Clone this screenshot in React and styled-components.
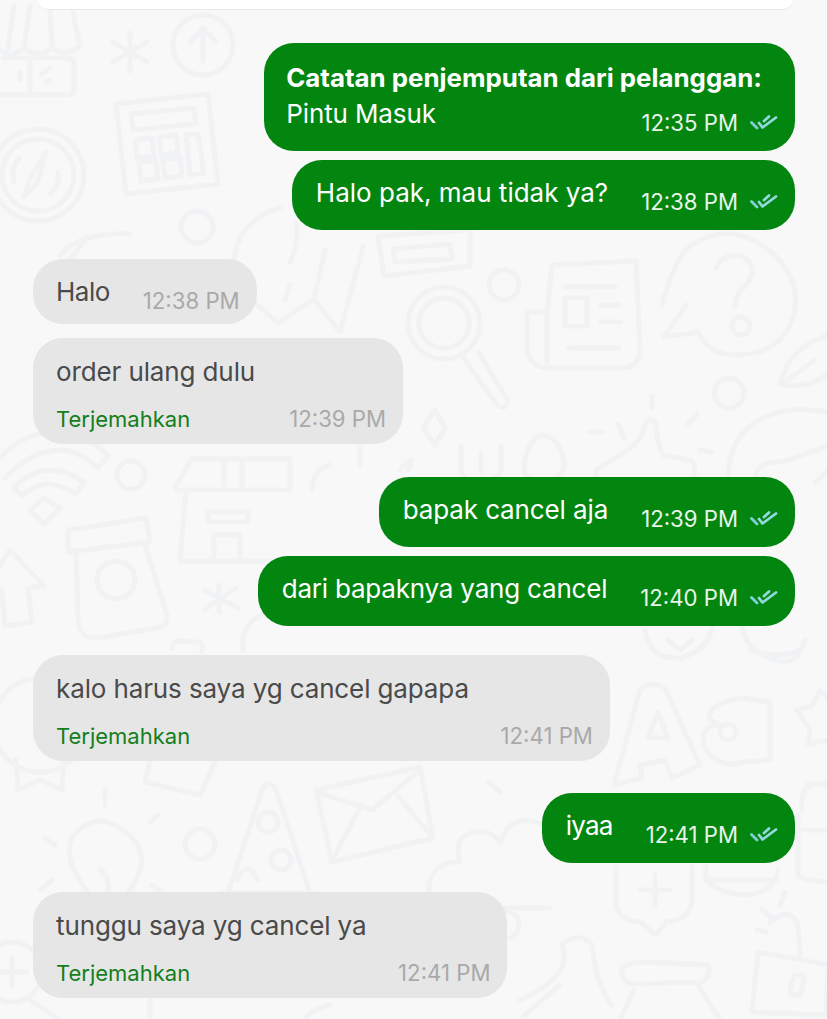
import React from 'react';
import styled, { createGlobalStyle } from 'styled-components';

const Global = createGlobalStyle`
  html, body {
    margin: 0;
    padding: 0;
    background: #f8f8f9;
  }
  body {
    font-family: Inter, "Liberation Sans", sans-serif;
  }
`;

const s = {
  Page: styled.div`
    position: relative;
    width: 827px;
    height: 1019px;
    overflow: hidden;
    background: #f8f8f9;
  `,
  Wallpaper: styled.svg`
    position: absolute;
    inset: 0;
    fill: none;
    stroke: #f1f2f4;
    stroke-width: 5;
    stroke-linecap: round;
    stroke-linejoin: round;
  `,
  TopCard: styled.div`
    position: relative;
    height: 9px;
    margin: 0 34px 0 38px;
    background: #fff;
    border-bottom: 1px solid #e9e9ea;
    border-radius: 0 0 18px 18px;
  `,
  Thread: styled.div`
    position: relative;
    display: flex;
    flex-direction: column;
    padding: 33px 32px 0 33px;
  `,
  Bubble: styled.div`
    align-self: ${(p) => (p.$mine ? 'flex-end' : 'flex-start')};
    margin-top: ${(p) => p.$gap || 0}px;
    box-sizing: border-box;
    height: ${(p) => p.$h}px;
    padding: ${(p) => p.$pt}px 17px 0 ${(p) => p.$pl ?? 24}px;
    border-radius: 30px;
    background: ${(p) => (p.$mine ? '#03860f' : '#e6e6e6')};
    color: ${(p) => (p.$mine ? '#fff' : '#4a4a4a')};
  `,
  Row: styled.div`
    display: flex;
    align-items: flex-start;
    justify-content: space-between;
    gap: 33px;
  `,
  Text: styled.div`
    font-size: 26px;
    line-height: 32px;
    letter-spacing: ${(p) => p.$ls ?? -0.12}px;
    white-space: nowrap;
    padding-right: ${(p) => p.$pr || 0}px;
  `,
  Title: styled.div`
    font-size: 25.85px;
    line-height: 30px;
    font-weight: 700;
    white-space: nowrap;
    padding-right: 16px;
    margin-bottom: 5px;
  `,
  Meta: styled.div`
    display: flex;
    align-items: center;
    gap: 12px;
    margin-top: ${(p) => p.$mt || 0}px;
    font-size: 22.2px;
    line-height: 28px;
    white-space: nowrap;
    color: ${(p) => (p.$mine ? '#e9f5ea' : '#a9a9a9')};
  `,
  Translate: styled.div`
    font-size: 22px;
    line-height: 28px;
    color: #137f1c;
    white-space: nowrap;
  `,
  FooterRow: styled.div`
    display: flex;
    justify-content: space-between;
    margin-top: 17px;
  `,
};

const Ticks = () => (
  <svg width="28" height="18" viewBox="0 0 28 18" fill="none" stroke="#93d8de" strokeWidth="2.8" strokeLinecap="round" strokeLinejoin="round">
    <path d="M1.5 8.5 L7 14" stroke="#83cedb" />
    <path d="M9 9 L12.5 13.5 L26 3.5" />
    <path d="M14 7 L19 2.5" />
  </svg>
);

const Mine = ({ text, time, gap, ls }) => (
  <s.Bubble $mine $gap={gap} $h={70} $pt={17}>
    <s.Row>
      <s.Text $ls={ls}>{text}</s.Text>
      <s.Meta $mine $mt={11}>
        {time}
        <Ticks />
      </s.Meta>
    </s.Row>
  </s.Bubble>
);

const Theirs = ({ text, time, gap, pr = 124 }) => (
  <s.Bubble $gap={gap} $h={106} $pt={18} $pl={23}>
    <s.Text $pr={pr}>{text}</s.Text>
    <s.FooterRow>
      <s.Translate>Terjemahkan</s.Translate>
      <s.Meta>{time}</s.Meta>
    </s.FooterRow>
  </s.Bubble>
);

const Doodles = () => (
  <s.Wallpaper width="827" height="1019" viewBox="0 0 827 1019">
    {/* store */}
    <path d="M-2 48 Q10 60 24 48 Q38 60 52 48 Q66 58 80 46 L72 8 M24 48 L30 6 M52 48 L50 6 M8 48 L14 6" />
    <path d="M3 58 H68 Q74 58 74 64 V88 Q74 95 66 95 H0 M30 60 V90 M20 72 V80 M42 74 L50 68 M46 82 L50 80" />
    {/* asterisk + arrow circle */}
    <path d="M130 33 V71 M113 42 L147 62 M147 42 L113 62" />
    <circle cx="203" cy="45" r="30" />
    <path d="M203 61 V28 M190 42 L203 28 L216 42" />
    {/* calculator */}
    <path d="M116 104 L208 94 L218 184 L126 194 Z" />
    <path d="M131 114 L194 108 L196 124 L133 130 Z" />
    <path d="M135 140 L152 138 L154 156 L137 158 Z M159 137 L176 135 L178 153 L161 155 Z M139 163 L156 161 L158 179 L141 181 Z M163 160 L180 158 L182 176 L165 178 Z M186 135 L198 134 L204 173 L190 175 Z" />
    {/* compass */}
    <circle cx="38" cy="175" r="46" />
    <circle cx="38" cy="175" r="36" />
    <path d="M46 152 L30 178 L24 196 L38 182 Z M14 182 Q10 168 20 158 M50 194 Q60 186 58 172" />
    <circle cx="197" cy="227" r="16" />
    {/* map pin + card */}
    <path d="M60 255 Q80 232 130 234 M68 262 L85 240" />
    <path d="M240 290 L278 323 L314 299 L340 332 L363 247 M314 299 L325 250 M285 300 L290 285 M240 290 Q225 250 250 225 Q262 212 280 208 M290 262 Q300 240 296 222" />
    <path d="M378 236 L470 230 L470 266 L384 276 Z M393 249 L450 244 L452 259 L395 262 Z" />
    <circle cx="504" cy="285" r="15" />
    {/* magnifier */}
    <circle cx="444" cy="323" r="36" />
    <circle cx="444" cy="323" r="25" />
    <path d="M463 357 L497 405 Q505 412 508 400 L478 352" />
    {/* newspaper */}
    <path d="M552 265 L636 261 L640 350 Q640 368 620 368 H550 Q527 368 527 345 V312 H547 L552 265 Z M547 312 V362" />
    <path d="M565 287 H615 M565 298 H587 V326 H565 Z M601 305 H619 M601 322 H621 M569 348 H619" />
    {/* question bubble */}
    <path d="M662 305 Q675 258 690 246 Q725 222 760 244 Q800 270 795 310 Q785 355 735 355 Q708 355 698 332 L664 337 L686 305" />
    <path d="M716 268 Q725 250 745 258 Q760 270 745 286 Q735 294 735 306" />
    <circle cx="741" cy="326" r="9" />
    {/* leaf */}
    <path d="M780 384 Q790 345 830 335 M780 384 Q810 390 830 372 M782 384 L815 360" />
    <circle cx="729" cy="393" r="15" />
    {/* thumb */}
    <path d="M596 480 V470 L625 452 Q643 440 645 424 Q650 416 656 424 Q656 440 663 455 L688 460 Q698 462 693 480" />
    <path d="M669 484 H690 M618 424 L624 438 M652 396 V408 M697 414 L688 424 M590 432 H602 M700 450 L712 452" />
    {/* sparkle + fork + spoon */}
    <path d="M435 410 L445 428 L435 445 L423 428 Z" />
    <path d="M461 446 V470 Q463 482 481 482 Q497 482 501 470 V446 M481 452 V472" />
    <path d="M542 435 Q526 440 524 470 Q526 482 544 482 Q562 480 564 465 Q562 438 542 435 Z" />
    <path d="M330 465 Q312 470 312 490 M400 470 Q418 450 408 470 M360 448 V466" />
    {/* smiley */}
    <path d="M728 480 Q728 415 800 409 L830 412 M755 482 Q755 460 782 462 L830 445 M815 482 L827 472" />
    {/* wifi */}
    <path d="M5 478 Q30 450 62 450 Q82 452 98 468 L108 455 Q80 430 50 432 Q20 435 0 458" />
    <path d="M14 488 Q30 470 54 470 Q70 472 84 482 L76 494 Q60 484 46 484 Q32 486 22 496 Z" />
    <path d="M30 510 L44 498 L60 508 L44 524 Z" />
    <circle cx="131" cy="475" r="14" />
    {/* shop box */}
    <path d="M176 486 L192 459 H290 V490 H176 Z M186 490 L180 561 H290 M224 459 V488 M242 459 V488 M208 512 H248 V522 H208 Z M214 561 V535 H240 V561" />
    {/* jar */}
    <path d="M68 530 L146 518 L150 542 L68 552 Z M76 552 L78 620 Q80 640 98 638 L158 628 Q170 624 166 612 L144 542" />
    <circle cx="116" cy="580" r="19" />
    {/* arrow */}
    <path d="M10 550 L44 586 L28 588 L32 622 L5 626 L2 590 L-16 590 Z" />
    <path d="M219 585 V612 M204 590 L238 608 M236 588 L204 610" />
    <path d="M172 648 Q172 638 190 642 Q205 640 202 652" />
    <path d="M243 650 Q240 625 262 615 L275 610" />
    {/* behind the green rows */}
    <path d="M645 630 Q650 660 680 658 Q710 650 712 625 M668 640 L680 650 L692 640" />
    <path d="M742 625 Q745 655 785 662 Q800 660 805 640 M750 650 Q780 660 800 650" />
    <circle cx="40" cy="725" r="47" />
    {/* A a star */}
    <path d="M614 785 L640 690 Q650 680 665 688 L700 765 L672 778 L665 760 L640 765 L642 778 Z M648 738 L658 712 L668 738 Z" />
    <path d="M710 720 Q705 705 740 698 L770 702 L770 760 L745 762 Q715 770 704 745 Q700 725 720 725 Z" />
    <circle cx="728" cy="732" r="8" />
    <path d="M796 710 L812 706 L820 690 L830 700 M798 712 L810 730 L808 744 L830 740" />
    {/* bottle + chat + coins */}
    <path d="M808 784 H830 M802 810 Q800 790 810 785 M798 815 V875 Q800 880 830 882 M800 830 H830" />
    <path d="M616 866 V905 Q618 920 640 922 L656 935 L666 922 Q690 920 692 900 V866" />
    <path d="M655 875 V905 M640 890 H670" />
    <path d="M706 866 V880 Q720 895 750 895 Q775 890 778 870 M706 880 H776" />
    {/* lock */}
    <path d="M758 952 L828 965 L826 1015 L752 1012 Z M770 922 Q790 905 798 925 L800 955 M762 910 L774 920 M780 905 L785 892 M757 930 L766 932" />
    <path d="M795 975 Q790 985 790 995 H800 Q805 985 803 975 Z" />
    {/* jar bottom */}
    <path d="M622 970 Q622 962 650 962 L708 965 Q712 975 702 982 L632 984 Q620 980 622 970 Z M634 990 L620 1020 M698 985 L720 1020" />
    {/* ribbon + envelope row */}
    <path d="M16 760 L18 790 L40 780 L62 790 L64 756" />
    <path d="M150 760 L145 782 L200 795 L215 762" />
    <path d="M105 790 V805 M45 838 L55 845 M158 815 L150 822 M40 890 L52 880 M152 885 L165 895" />
    {/* bulb */}
    <path d="M90 905 V895 Q62 860 72 838 Q86 818 108 822 Q140 836 142 860 Q140 880 122 900 V912 M102 870 Q110 880 108 892 M100 870 L108 878" />
    <circle cx="200" cy="844" r="15" />
    {/* pizza */}
    <path d="M228 893 L262 790 Q269 778 276 790 L310 893 Z M221 893 H316 V913 H221 Z M237 880 Q248 858 258 880" />
    <circle cx="268" cy="822" r="10" />
    <circle cx="281" cy="860" r="10" />
    {/* envelope */}
    <path d="M316 790 L420 767 L433 838 L332 862 Z M316 792 L372 810 L420 770 M332 860 L360 808 M433 838 L398 796" />
    {/* cloud */}
    <path d="M445 908 Q425 900 430 880 Q438 860 460 862 Q452 835 476 832 Q492 830 500 842 Q510 815 535 822 Q556 828 558 850" />
    <path d="M445 908 H550" />
    <path d="M488 782 L500 792" />
    <circle cx="505" cy="925" r="14" />
    {/* left cross */}
    <circle cx="12" cy="972" r="30" />
    <path d="M12 957 V987 M-3 972 H27" />
    <path d="M520 1000 Q575 975 562 945 Q578 930 592 945 Q596 985 612 1005 M525 1015 L560 985" />
    <path d="M30 1000 L60 1020 M150 1000 V1020 M330 1005 Q310 1010 305 1020" />
  </s.Wallpaper>
);

export default function App() {
  return (
    <s.Page>
      <Global />
      <Doodles />
      <s.TopCard />
      <s.Thread>
        <s.Bubble $mine $h={108} $pt={20} $pl={22}>
          <s.Title>Catatan penjemputan dari pelanggan:</s.Title>
          <s.Row>
            <s.Text>Pintu Masuk</s.Text>
            <s.Meta $mine $mt={11}>
              12:35 PM
              <Ticks />
            </s.Meta>
          </s.Row>
        </s.Bubble>
        <Mine gap={9} ls={0} text="Halo pak, mau tidak ya?" time="12:38 PM" />
        <s.Bubble $gap={29} $h={65} $pt={17} $pl={23}>
          <s.Row>
            <s.Text $ls={-0.5}>Halo</s.Text>
            <s.Meta $mt={11}>12:38 PM</s.Meta>
          </s.Row>
        </s.Bubble>
        <Theirs gap={14} pr={131} text="order ulang dulu" time="12:39 PM" />
        <Mine gap={33} text="bapak cancel aja" time="12:39 PM" />
        <Mine gap={9} ls={-0.2} text="dari bapaknya yang cancel" time="12:40 PM" />
        <Theirs gap={29} text="kalo harus saya yg cancel gapapa" time="12:41 PM" />
        <Mine gap={32} ls={-0.75} text="iyaa" time="12:41 PM" />
        <Theirs gap={29} text="tunggu saya yg cancel ya" time="12:41 PM" />
      </s.Thread>
    </s.Page>
  );
}
